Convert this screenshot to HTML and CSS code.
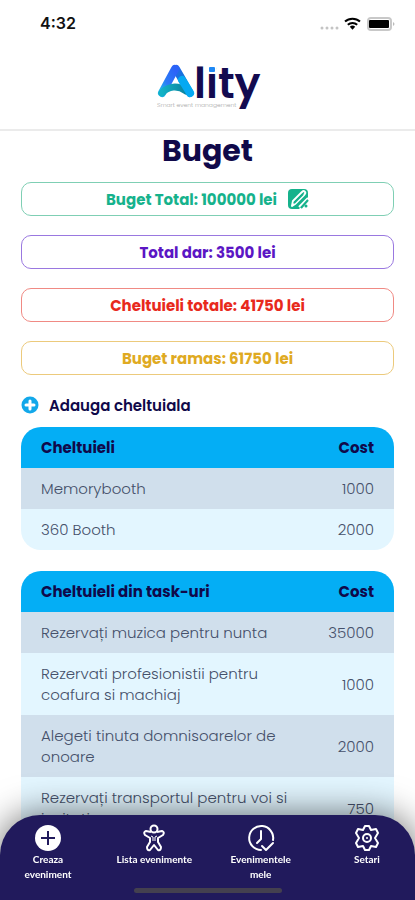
FILE: index.html
```html
<!DOCTYPE html>
<html lang="ro">
<head>
	<meta charset="utf-8">
	<meta name="viewport" content="width=device-width, initial-scale=1.0">
	<link rel="stylesheet" href="styles.css">
	<title>Ality - Buget</title>
</head>
<body>
	<header class="header">
		<div class="status">
			<span class="time">4:32</span>
			<svg class="status-icons" width="76" height="16" viewBox="0 0 76 16">
				<g fill="#c4c4c4">
					<circle cx="3" cy="12" r="1.5"/>
					<circle cx="8" cy="12" r="1.5"/>
					<circle cx="13" cy="12" r="1.5"/>
					<circle cx="18" cy="12" r="1.5"/>
				</g>
				<g fill="none" stroke="#000" stroke-width="2">
					<path d="M26 5.600a11 11 0 0 1 15 0"/>
					<path d="M28.800 8.800a7 7 0 0 1 9.400 0"/>
				</g>
				<path d="M30.800 10.800a4 4 0 0 1 5.400 0l-2.700 3z" fill="#000"/>
				<rect x="49" y="2" width="23" height="12" rx="3" fill="#fff" stroke="#c8c8c8" stroke-width="2"/>
				<rect x="50" y="4" width="20" height="8" rx="1" fill="#000"/>
				<path d="M74 6q3 2 0 4z" fill="#bbb"/>
			</svg>
		</div>
		<svg class="logo" width="104" height="54" viewBox="0 0 104 54">
			<defs>
				<linearGradient id="right" x1="0" y1="0" x2="0.600" y2="1">
					<stop offset="0" stop-color="#2467ee"/>
					<stop offset="0.500" stop-color="#1476d6"/>
					<stop offset="1" stop-color="#04b0f5"/>
				</linearGradient>
				<linearGradient id="left" x1="1" y1="0" x2="0" y2="1">
					<stop offset="0" stop-color="#2b62f8"/>
					<stop offset="0.600" stop-color="#2b7bf6"/>
					<stop offset="1" stop-color="#1fb4ee"/>
				</linearGradient>
				<linearGradient id="bar" x1="0" y1="0" x2="1" y2="0">
					<stop offset="0" stop-color="#12b2c6"/>
					<stop offset="1" stop-color="#0b829e"/>
				</linearGradient>
			</defs>
			<g fill="none" stroke-linecap="round" stroke-linejoin="round" stroke-width="8">
				<path d="M20 9L34 33" stroke="url(#right)"/>
				<path d="M6 33L19 9" stroke="url(#left)"/>
				<path d="M6 33C12 26 22 25 30 31" stroke="url(#bar)" stroke-width="7"/>
				<path d="M26 20L34 33" stroke="#05a9f2"/>
			</g>
			<text class="logo-name" x="38" y="38">lity</text>
			<rect x="51" y="2" width="9" height="11" fill="#fff"/>
			<rect x="53" y="7" width="6" height="5" rx="1" fill="#1e88f5"/>
			<text class="logo-tag" x="1" y="47">Smart event management</text>
		</svg>
	</header>

	<main class="content">
		<h1>Buget</h1>
		<div class="box total">
			<p>Buget Total: 100000 lei</p>
			<button class="edit" aria-label="Editeaza bugetul">
				<svg width="22" height="22" viewBox="0 0 22 22">
					<rect x="1" y="1" width="20" height="20" rx="4" fill="#16b28c"/>
					<path d="M21 21V12L12 21z" fill="#fff"/>
					<path d="M5 18l1-5L15 4q2-2 3 0 1 1-1 3l-9 9zM12 19l9-9" fill="none" stroke="#fff" stroke-width="2" stroke-linejoin="round"/>
					<path d="M7 15L16 6" stroke="#16b28c" stroke-width="2"/>
					<path d="M14 20l7-8" stroke="#16b28c" stroke-width="2"/>
					<circle cx="19" cy="18" r="1.500" fill="#16b28c"/>
				</svg>
			</button>
		</div>
		<div class="box dar"><p>Total dar: 3500 lei</p></div>
		<div class="box cheltuieli"><p>Cheltuieli totale: 41750 lei</p></div>
		<div class="box ramas"><p>Buget ramas: 61750 lei</p></div>

		<button class="add">
			<svg width="18" height="18" viewBox="0 0 18 18">
				<circle cx="9" cy="9" r="8.500" fill="#12a8ea"/>
				<path d="M9 5v8M5 9h8" stroke="#fff" stroke-width="3" stroke-linecap="round"/>
			</svg>
			Adauga cheltuiala
		</button>

		<table>
			<thead>
				<tr><th>Cheltuieli</th><th class="cost">Cost</th></tr>
			</thead>
			<tbody>
				<tr><td>Memorybooth</td><td class="cost">1000</td></tr>
				<tr><td>360 Booth</td><td class="cost">2000</td></tr>
			</tbody>
		</table>

		<table>
			<thead>
				<tr><th>Cheltuieli din task-uri</th><th class="cost">Cost</th></tr>
			</thead>
			<tbody>
				<tr><td>Rezervați muzica pentru nunta</td><td class="cost">35000</td></tr>
				<tr><td>Rezervati profesionistii pentru coafura si machiaj</td><td class="cost">1000</td></tr>
				<tr><td>Alegeti tinuta domnisoarelor de onoare</td><td class="cost">2000</td></tr>
				<tr><td>Rezervați transportul pentru voi si invitati</td><td class="cost">750</td></tr>
			</tbody>
		</table>
	</main>

	<nav class="navbar">
		<div class="links">
			<a href="#">
				<svg width="28" height="28" viewBox="0 0 28 28">
					<circle cx="14" cy="14" r="13" fill="#fff"/>
					<path d="M14 7v14M7 14h14" stroke="#211a5c" stroke-width="2"/>
				</svg>
				Creaza eveniment
			</a>
			<a href="#">
				<svg width="28" height="28" viewBox="0 0 28 28" fill="none" stroke="#fff" stroke-width="2" stroke-linejoin="round">
					<circle cx="14" cy="5" r="3.500"/>
					<path d="M11 8L6 7q-3 1-1 4l5 3v4l-3 5q0 4 3 3l4-5 4 5q3 1 3-3l-3-5v-4l5-3q2-3-1-4l-5 1"/>
					<path d="M11 12l2 1v4M17 12l-2 1v4" stroke-width="1"/>
				</svg>
				Lista evenimente
			</a>
			<a href="#">
				<svg width="28" height="28" viewBox="0 0 28 28" fill="none" stroke="#fff" stroke-width="2" stroke-linecap="round" stroke-linejoin="round">
					<path d="M14 26A12 12 0 1 1 26 16"/>
					<path d="M14 7v8l-4 4"/>
					<path d="M15 22l4 4 7-7"/>
				</svg>
				Evenimentele mele
			</a>
			<a href="#">
				<svg width="28" height="28" viewBox="0 0 28 28" fill="none" stroke="#fff" stroke-width="2" stroke-linejoin="round">
					<path d="M12 2h4l2 4 5-1 2 4-3 5 3 5-2 4-5-1-2 4h-4l-2-4-5 1-2-4 3-5-3-5 2-4 5 1z"/>
					<circle cx="14" cy="14" r="4"/>
					<circle cx="14" cy="14" r="1" fill="#fff" stroke="none"/>
				</svg>
				Setari
			</a>
		</div>
		<div class="home-bar"></div>
	</nav>
</body>
</html>
```
FILE: styles.css
```css
*{
	margin: 0;
	padding: 0;
	box-sizing: border-box;
	font-family: 'Poppins', 'Inter', sans-serif;
}
body{
	display: flex;
	flex-direction: column;
	height: 100vh;
	overflow: hidden;
	background-color: #fff;
	color: #10094a;
}
button{
	background: none;
	border: 0;
	cursor: pointer;
}
svg{
	display: block;
}

/* header */
.header{
	flex-shrink: 0;
	padding-bottom: 15px;
	border-bottom: 2px solid #ebebeb;
}
.status{
	display: flex;
	align-items: center;
	justify-content: space-between;
	padding: 15px 20px 0 40px;
}
.time{
	font-family: 'Inter', sans-serif;
	font-size: 16px;
	line-height: 17px;
	font-weight: 600;
	color: #111;
}
.logo{
	margin: 28px auto 0;
	overflow: visible;
}
.logo-name{
	font-family: 'Poppins', 'Lato', sans-serif;
	font-size: 43px;
	font-weight: 600;
	fill: #130b50;
}
.logo-tag{
	font-size: 6px;
	font-weight: 300;
	fill: #aaa;
}

/* budget */
.content{
	flex: 1;
	overflow-y: auto;
	scrollbar-width: none;
	padding: 0 21px 110px;
}
h1{
	font-size: 30px;
	line-height: 40px;
	font-weight: 700;
	text-align: center;
	margin-bottom: 11px;
}
.box{
	display: flex;
	align-items: center;
	justify-content: center;
	gap: 10px;
	height: 34px;
	margin-bottom: 19px;
	border: 1px solid;
	border-radius: 10px;
	font-size: 15px;
	line-height: 21px;
	font-weight: 700;
}
.total{
	color: #16b28c;
	border-color: #7fcfb4;
}
.dar{
	color: #5b16c4;
	border-color: #9a78e0;
}
.cheltuieli{
	color: #e8291c;
	border-color: #f08a84;
}
.ramas{
	color: #dfaa22;
	border-color: #ecca7c;
}
.add{
	display: flex;
	align-items: center;
	gap: 10px;
	height: 22px;
	margin-bottom: 11px;
	font-size: 15px;
	font-weight: 600;
	color: #10094a;
}

/* tables */
table{
	width: 100%;
	border-collapse: collapse;
	border-radius: 20px;
	overflow: hidden;
	margin-bottom: 21px;
	font-size: 15px;
	line-height: 21px;
}
th, td{
	padding: 10px 20px;
	text-align: left;
}
th{
	background-color: #04aef5;
	font-weight: 700;
}
td{
	background-color: #e3f6ff;
	color: #45506a;
	font-weight: 300;
}
tbody tr:nth-child(odd) td{
	background-color: #d0dfec;
}
th.cost, td.cost{
	width: 80px;
	text-align: right;
}

/* bottom bar */
.navbar{
	position: fixed;
	left: 0;
	right: 0;
	bottom: 0;
	padding: 9px 10px 7px;
	background-color: #211a5c;
	border-radius: 40px 40px 0 0;
	box-shadow: 0 0 36px rgba(0, 0, 0, 0.6);
}
.links{
	display: flex;
	justify-content: space-between;
}
.links a{
	display: flex;
	flex-direction: column;
	align-items: center;
	width: 76px;
	min-height: 64px;
	color: #fff;
	font-family: 'Lato', sans-serif;
	font-size: 10px;
	line-height: 15px;
	font-weight: 700;
	text-align: center;
	text-decoration: none;
}
.home-bar{
	width: 148px;
	height: 5px;
	margin: 0 auto;
	border-radius: 3px;
	background-color: #44404f;
}
```
